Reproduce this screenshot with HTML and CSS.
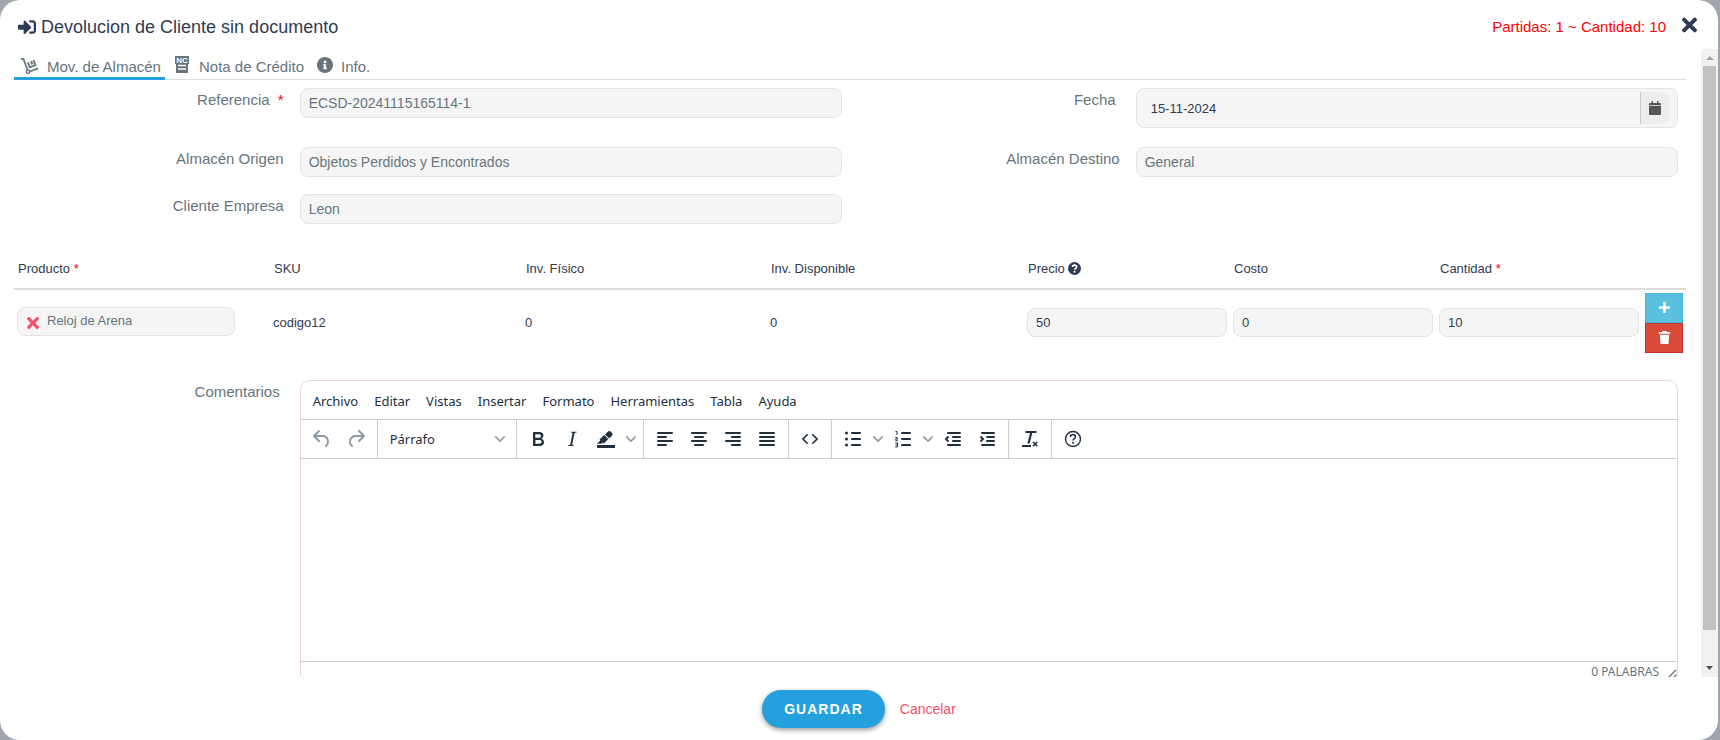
FILE: index.html
```html
<!DOCTYPE html>
<html lang="es">
<head>
<meta charset="utf-8">
<title>Devolucion de Cliente sin documento</title>
<link rel="stylesheet" href="styles.css">
</head>
<body>
<svg class="sprite" aria-hidden="true">
  <symbol id="times" viewBox="0 0 352 512"><path d="M242.72 256l100.07-100.07c12.28-12.28 12.28-32.19 0-44.48l-22.24-22.24c-12.28-12.28-32.19-12.28-44.48 0L176 189.28 75.93 89.21c-12.28-12.28-32.19-12.28-44.48 0L9.21 111.45c-12.28 12.28-12.28 32.19 0 44.48L109.28 256 9.21 356.07c-12.28 12.28-12.28 32.19 0 44.48l22.24 22.24c12.28 12.28 32.2 12.28 44.48 0L176 322.72l100.07 100.07c12.28 12.28 32.2 12.28 44.48 0l22.24-22.24c12.28-12.28 12.28-32.19 0-44.48L242.72 256z"/></symbol>
  <symbol id="chevron" viewBox="0 0 10 10"><path d="M8.7 2.2c.3-.3.8-.3 1 0 .4.4.4.9 0 1.2L5.7 7.8c-.3.3-.9.3-1.2 0L.2 3.4a.8.8 0 0 1 0-1.2c.3-.3.8-.3 1.1 0L5 6l3.7-3.8z"/></symbol>
</svg>
<main class="modal">
  <header class="modal-header">
    <svg class="icon-title" viewBox="0 0 512 512"><path d="M416 448h-84c-6.600 0-12-5.400-12-12v-40c0-6.600 5.400-12 12-12h84c17.700 0 32-14.300 32-32V160c0-17.700-14.300-32-32-32h-84c-6.600 0-12-5.400-12-12V76c0-6.600 5.400-12 12-12h84c53 0 96 43 96 96v192c0 53-43 96-96 96zm-47-201L201 79c-15-15-41-4.500-41 17v96H24c-13.300 0-24 10.700-24 24v96c0 13.300 10.700 24 24 24h136v96c0 21.500 26 32 41 17l168-168c9.300-9.400 9.300-24.600 0-34z"/></svg>
    <h1 class="title">Devolucion de Cliente sin documento</h1>
    <span class="totals">Partidas: 1 ~ Cantidad: 10</span>
    <button class="close" type="button" aria-label="Cerrar"><svg class="icon-close"><use href="#times"/></svg></button>
  </header>

  <div class="modal-body">
    <div class="content">
      <nav class="tabs">
        <button class="tab tab-active" type="button">
          <svg class="icon-tab icon-dolly" viewBox="0 0 20 18"><path d="M1 1.500h2.500L8 13" fill="none" stroke="currentColor" stroke-width="1.800" stroke-linejoin="round"/><path d="M10.500 14.800L19 11.500" stroke="currentColor" stroke-width="1.800" fill="none"/><circle cx="8.500" cy="15" r="1.800" fill="none" stroke="currentColor" stroke-width="1.500"/><path d="M8.300 5.200L10.300 10.400L16.300 8L14.300 2.800" fill="none" stroke="currentColor" stroke-width="2"/><path d="M10.700 4.400l2-.8 1.200 3.300-2 .8z"/></svg>
          Mov. de Almacén</button>
        <button class="tab" type="button">
          <svg class="icon-tab icon-note" viewBox="0 0 14 17"><path d="M0 0h14v8H0zM1 8h12v9H1z"/><text class="note-text" x="7" y="7" text-anchor="middle">NC</text><path d="M3 9.500h8M3 13h8" stroke="#fff" stroke-width="1.400"/></svg>
          Nota de Crédito</button>
        <button class="tab tab-info" type="button">
          <svg class="icon-tab icon-info" viewBox="8 8 496 496"><path d="M256 8C119.043 8 8 119.083 8 256c0 136.997 111.043 248 248 248s248-111.003 248-248C504 119.083 392.957 8 256 8zm0 110c23.196 0 42 18.804 42 42s-18.804 42-42 42-42-18.804-42-42 18.804-42 42-42zm56 254c0 6.627-5.373 12-12 12h-88c-6.627 0-12-5.373-12-12v-24c0-6.627 5.373-12 12-12h12v-64h-12c-6.627 0-12-5.373-12-12v-24c0-6.627 5.373-12 12-12h64c6.627 0 12 5.373 12 12v100h12c6.627 0 12 5.373 12 12v24z"/></svg>
          Info.</button>
      </nav>

      <form class="form" id="movement">
        <div class="row row-tall">
          <div class="field"><label for="ref">Referencia <span class="req req-wide">*</span></label><div class="control"><input id="ref" class="input" value="ECSD-20241115165114-1" readonly></div></div>
          <div class="field"><label for="date" class="label-inset">Fecha</label><div class="control"><div class="date-box"><input id="date" class="date-input" value="15-11-2024"><button class="date-button" type="button" aria-label="Calendario"><svg class="icon-calendar" viewBox="0 0 12 14"><path d="M2.500 0h1.500v2h4V0h1.500v2h1.500q1 0 1 1v1.300H0V3q0-1 1-1h1.500zM0 5h12v8q0 1-1 1H1q-1 0-1-1z"/></svg></button></div></div></div>
        </div>
        <div class="row">
          <div class="field"><label for="origin">Almacén Origen</label><div class="control"><input id="origin" class="input" value="Objetos Perdidos y Encontrados" readonly></div></div>
          <div class="field"><label for="target">Almacén Destino</label><div class="control"><input id="target" class="input" value="General" readonly></div></div>
        </div>
        <div class="row">
          <div class="field"><label for="client">Cliente Empresa</label><div class="control"><input id="client" class="input" value="Leon" readonly></div></div>
        </div>
      </form>

      <table class="items">
        <colgroup><col class="c-product"><col class="c-sku"><col class="c-stock"><col class="c-available"><col class="c-number"><col class="c-number"><col class="c-number"><col class="c-actions"></colgroup>
        <thead><tr>
          <th>Producto <span class="req">*</span></th><th>SKU</th><th>Inv. Físico</th><th>Inv. Disponible</th>
          <th>Precio <svg class="icon-help" viewBox="0 0 16 16"><circle cx="8" cy="8" r="8"/><path d="M5.500 6.200C5.500 3 10.600 3 10.600 6.200c0 1.800-2.500 1.700-2.500 3.300" fill="none" stroke="#fff" stroke-width="2"/><circle cx="8.100" cy="12" r="1.300" fill="#fff"/></svg></th>
          <th>Costo</th><th>Cantidad <span class="req">*</span></th><th></th>
        </tr></thead>
        <tbody><tr>
          <td><div class="product"><button class="remove" type="button" aria-label="Quitar producto"><svg class="icon-remove"><use href="#times"/></svg></button><span>Reloj de Arena</span></div></td>
          <td>codigo12</td><td>0</td><td>0</td>
          <td><input class="input input-small" aria-label="Precio" value="50"></td>
          <td><input class="input input-small" aria-label="Costo" value="0"></td>
          <td><input class="input input-small" aria-label="Cantidad" value="10"></td>
          <td><div class="actions">
            <button class="action action-add" type="button" aria-label="Agregar"><svg class="icon-action" viewBox="0 0 14 14"><path d="M5.700 1h2.600v4.700H13v2.600H8.300V13H5.700V8.300H1V5.700h4.700z"/></svg></button>
            <button class="action action-delete" type="button" aria-label="Eliminar"><svg class="icon-action" viewBox="0 0 14 14"><path d="M5 0h4l.7 1H13v2H1V1h3.300zM2 4h10l-.6 9q-.1 1-1 1H3.600q-.9 0-1-1z"/></svg></button>
          </div></td>
        </tr></tbody>
      </table>

      <div class="comments">
        <label for="editor" class="label-inset">Comentarios</label>
        <div class="control">
          <div class="editor">
            <div class="menubar"><button type="button">Archivo</button><button type="button">Editar</button><button type="button">Vistas</button><button type="button">Insertar</button><button type="button">Formato</button><button type="button">Herramientas</button><button type="button">Tabla</button><button type="button">Ayuda</button></div>
            <div class="toolbar">
              <div class="group">
                <button class="tool muted" type="button" aria-label="Deshacer"><svg viewBox="0 0 24 24"><path d="M6.400 8H12c3.700 0 6.200 2 6.800 5.100.6 2.700-.4 5.600-2.300 6.800a1 1 0 0 1-1-1.800c1.100-.6 1.800-2.700 1.400-4.600-.5-2.100-2.100-3.500-4.900-3.500H6.400l3.300 3.300a1 1 0 1 1-1.400 1.400l-5-5a1 1 0 0 1 0-1.400l5-5a1 1 0 0 1 1.400 1.400L6.400 8z"/></svg></button>
                <button class="tool muted" type="button" aria-label="Rehacer"><svg viewBox="0 0 24 24"><path d="M17.600 10H12c-2.800 0-4.400 1.400-4.900 3.500-.4 2 .3 4 1.400 4.600a1 1 0 1 1-1 1.800c-2-1.200-2.900-4.100-2.300-6.800.6-3 3-5.100 6.800-5.100h5.600l-3.300-3.300a1 1 0 1 1 1.400-1.400l5 5a1 1 0 0 1 0 1.400l-5 5a1 1 0 0 1-1.400-1.400l3.300-3.300z"/></svg></button>
              </div>
              <div class="group"><button class="block-select" type="button"><span>Párrafo</span><svg class="chevron"><use href="#chevron"/></svg></button></div>
              <div class="group">
                <button class="tool" type="button" aria-label="Negrita"><svg viewBox="0 0 24 24"><path d="M7.800 19c-.3 0-.5 0-.6-.2l-.2-.5V5.700c0-.2 0-.4.200-.5l.6-.2h5c1.500 0 2.700.3 3.500 1 .7.6 1.100 1.400 1.100 2.500a3 3 0 0 1-.6 1.900c-.4.6-1 1-1.600 1.200.4.100.9.300 1.300.6s.8.700 1 1.200c.4.400.5 1 .5 1.600 0 1.300-.4 2.300-1.300 3-.8.700-2.100 1-3.800 1H7.800zm5-8.300c.6 0 1.200-.1 1.600-.5.4-.3.6-.7.600-1.300 0-1.100-.8-1.700-2.300-1.700H9.300v3.500h3.400zm.5 6c.7 0 1.300-.1 1.700-.4.4-.4.600-.9.600-1.500s-.2-1-.7-1.400c-.4-.3-1-.4-2-.4H9.400v3.800h4z"/></svg></button>
                <button class="tool" type="button" aria-label="Cursiva"><svg viewBox="0 0 24 24"><path d="M16.700 4.700l-.1.900h-.3c-.6 0-1 0-1.400.3-.3.300-.4.600-.5 1.100l-2.100 9.800v.6c0 .5.400.8 1.400.8h.2l-.2.800H8l.2-.8h.2c1.100 0 1.800-.5 2-1.500l2-9.800.1-.5c0-.6-.4-.8-1.400-.8h-.3l.2-.9h5.800z"/></svg></button>
                <button class="tool" type="button" aria-label="Color de fondo"><svg viewBox="0 0 24 24"><path d="M3 18h18v3H3zM7.700 16.700H3l3.300-3.300-.7-.8L10.200 8l4 4.100-4 4.200c-.2.200-.6.200-.8 0l-.6-.7-1.100 1.100zm5-7.500L11 7.400l3-2.900a2 2 0 0 1 2.600 0L18 6c.7.700.7 2 0 2.700l-2.900 2.900-1.800-1.800z"/></svg></button>
                <button class="drop" type="button" aria-label="Colores"><svg class="chevron"><use href="#chevron"/></svg></button>
              </div>
              <div class="group lines">
                <button class="tool" type="button" aria-label="Alinear a la izquierda"><svg viewBox="0 0 24 24"><path d="M5 6h14M5 10h8M5 14h14M5 18h8"/></svg></button>
                <button class="tool" type="button" aria-label="Centrar"><svg viewBox="0 0 24 24"><path d="M5 6h14M8 10h8M5 14h14M8 18h8"/></svg></button>
                <button class="tool" type="button" aria-label="Alinear a la derecha"><svg viewBox="0 0 24 24"><path d="M5 6h14M11 10h8M5 14h14M11 18h8"/></svg></button>
                <button class="tool" type="button" aria-label="Justificar"><svg viewBox="0 0 24 24"><path d="M5 6h14M5 10h14M5 14h14M5 18h14"/></svg></button>
              </div>
              <div class="group"><button class="tool" type="button" aria-label="Código fuente"><svg viewBox="0 0 24 24"><path d="M9.800 15.700c.3.300.3.800 0 1-.3.400-.9.400-1.200 0l-4.400-4.100a.8.800 0 0 1 0-1.200l4.400-4.200c.3-.3.900-.3 1.200 0 .3.300.3.800 0 1.100L6 12l3.800 3.700zM14.200 15.700c-.3.300-.3.800 0 1 .4.400.9.400 1.200 0l4.400-4.100c.3-.3.300-.8 0-1.200l-4.400-4.200a.8.800 0 0 0-1.200 0c-.3.300-.3.800 0 1.100L18 12l-3.800 3.700z"/></svg></button></div>
              <div class="group lines">
                <button class="tool" type="button" aria-label="Lista"><svg viewBox="0 0 24 24"><path d="M11 6h8M11 12h8M11 18h8"/><path d="M5.500 6h.01M5.500 12h.01M5.500 18h.01" class="dots"/></svg></button>
                <button class="drop" type="button" aria-label="Tipos de lista"><svg class="chevron"><use href="#chevron"/></svg></button>
                <button class="tool" type="button" aria-label="Lista numerada"><svg viewBox="0 0 24 24"><path d="M11 6h8M11 12h8M11 18h8"/><path class="digits" d="M4.500 4.500H6V8M4.300 10.500h2v1.500h-1.500v1.700h2M4.300 16h2.200v4H4.300M4.500 18h2"/></svg></button>
                <button class="drop" type="button" aria-label="Tipos de numeración"><svg class="chevron"><use href="#chevron"/></svg></button>
                <button class="tool" type="button" aria-label="Reducir sangría"><svg viewBox="0 0 24 24"><path d="M7 6h12M12 10h7M12 14h7M7 18h12"/><path class="arrow" d="M7.500 9.500L5 12l2.500 2.500"/></svg></button>
                <button class="tool" type="button" aria-label="Aumentar sangría"><svg viewBox="0 0 24 24"><path d="M7 6h12M12 10h7M12 14h7M7 18h12"/><path class="arrow" d="M5.500 9.500L8 12l-2.500 2.500"/></svg></button>
              </div>
              <div class="group"><button class="tool" type="button" aria-label="Limpiar formato"><svg viewBox="0 0 24 24"><path d="M7.500 4h11v2h-4.200l-2.700 10.500H9.400L12.100 6H7.500zM4 18h9v2H4z"/><path d="M15 15l4.300 4.300M19.300 15L15 19.300" stroke="currentColor" stroke-width="1.600"/></svg></button></div>
              <div class="group"><button class="tool" type="button" aria-label="Ayuda"><svg viewBox="0 0 24 24"><circle cx="12" cy="12" r="7.500" fill="none" stroke="currentColor" stroke-width="1.400"/><path d="M9.500 10c0-3.300 5-3.300 5 0 0 1.600-2.500 1.700-2.500 3.500" fill="none" stroke="currentColor" stroke-width="1.500"/><circle cx="12" cy="15.700" r="1"/></svg></button></div>
            </div>
            <textarea id="editor" class="editor-text"></textarea>
            <div class="statusbar"><span>0 PALABRAS</span><svg class="icon-resize" viewBox="0 0 10 10"><path d="M1 9L9 1M5.500 9.500l4-4" fill="none" stroke="currentColor" stroke-width="1.400"/></svg></div>
          </div>
        </div>
      </div>
    </div>
    <div class="scrollbar" aria-hidden="true">
      <svg class="scroll-arrow arrow-up" viewBox="0 0 17 17"><path d="M5 11l4-4 4 4z"/></svg>
      <div class="track"><div class="thumb"></div></div>
      <svg class="scroll-arrow arrow-down" viewBox="0 0 17 17"><path d="M5 6h7L8.500 10z"/></svg>
    </div>
  </div>

  <footer class="modal-footer">
    <button class="save" type="submit" form="movement">GUARDAR</button>
    <button class="cancel" type="button">Cancelar</button>
  </footer>
</main>
</body>
</html>
```

FILE: styles.css
```css
* { box-sizing: border-box; }
body {
  margin: 0;
  background: #a0a5ae;
  color: #2f3b52;
  font-family: "Liberation Sans", Arial, sans-serif;
  font-size: 15px;
}
button, input, textarea { font: inherit; color: inherit; }
button { background: none; border: 0; padding: 0; cursor: pointer; }
svg { fill: currentColor; flex: none; }
.sprite { display: none; }

.modal {
  display: flex;
  flex-direction: column;
  height: 100vh;
  margin-right: 2px;
  background: #fff;
  border-radius: 20px;
  overflow: hidden;
}
.modal-header {
  display: flex;
  align-items: center;
  height: 49px;
  padding: 4px 21px 0 18px;
  flex: none;
}
.icon-title { width: 18px; height: 18px; margin-right: 5px; }
.title { margin: 0; padding-top: 2px; font-size: 18px; font-weight: 400; flex: 1; }
.totals { padding-bottom: 1px; color: #f00; }
.close { display: flex; margin: 0 0 3px 16px; }
.icon-close { width: 15px; height: 22px; }

.modal-body { display: flex; flex: 1; min-height: 0; }
.content { flex: 1; min-width: 0; padding: 0 15px 0 14px; overflow: hidden; }

.tabs { display: flex; height: 31px; border-bottom: 1px solid #ddd; color: #67757c; }
.tab { display: flex; align-items: center; height: 31px; padding: 6px 0 0 4px; border-bottom: 3px solid transparent; margin-right: 6px; }
.tab-active { padding: 6px 4px 0 6px; border-color: #24a0dc; }
.tab-info { padding-left: 7px; }
.icon-tab { margin-right: 8px; }
.icon-dolly { width: 19px; height: 18px; }
.icon-note { width: 14px; height: 17px; margin: 0 10px 3px 0; }
.note-text { fill: #fff; font-size: 8px; font-weight: 700; }
.icon-info { width: 16px; height: 16px; margin-bottom: 2px; }

.form { padding-top: 8px; }
.row { display: grid; grid-template-columns: 1fr 1fr; min-height: 30px; margin-bottom: 17px; }
.row-tall { min-height: 42px; }
.field { display: grid; grid-template-columns: 1fr 2fr; }
label { padding-right: 9px; line-height: 24px; text-align: right; color: #67757c; }
.label-inset { padding-right: 13px; }
.control { padding: 0 8px 0 7px; min-width: 0; }
.req { color: #f00; }
.req-wide { margin-left: 4px; }
.input {
  display: block;
  width: 100%;
  height: 30px;
  padding: 0 8px;
  border: 1px solid #e4e4e4;
  border-radius: 8px;
  background: #f5f5f5;
  color: #67757c;
  font-size: 14px;
}
.date-box {
  display: flex;
  height: 40px;
  padding: 3px 8px 3px 14px;
  border: 1px solid #e4e4e4;
  border-radius: 8px;
  background: #f5f5f5;
}
.date-input { flex: 1; min-width: 0; padding: 0; border: 0; background: none; font-size: 13px; }
.date-button {
  display: flex;
  align-items: center;
  justify-content: center;
  width: 29px;
  border-left: 1px solid #ccc;
  border-radius: 0 8px 8px 0;
  background: #ededed;
  color: #555;
}
.icon-calendar { width: 12px; height: 14px; }

.items { width: 100%; margin-top: 23px; border-collapse: collapse; table-layout: fixed; font-size: 13px; }
.c-product { width: 256px; }
.c-sku { width: 252px; }
.c-stock { width: 245px; }
.c-available { width: 257px; }
.c-number { width: 206px; }
.c-actions { width: 44px; }
.items th { height: 42px; padding: 1px 4px 0; border-bottom: 2px solid #ddd; text-align: left; font-weight: 400; }
.items td { height: 66px; padding: 0 3px; }
.icon-help { width: 13px; height: 13px; vertical-align: -2px; }
.product {
  display: flex;
  width: 87%;
  height: 29px;
  margin-bottom: 3px;
  padding-left: 9px;
  border: 1px solid #e4e4e4;
  border-radius: 8px;
  background: #f5f5f5;
  color: #67757c;
  line-height: 26px;
}
.remove { display: flex; align-items: center; margin-right: 8px; padding-top: 3px; color: #f4516c; }
.icon-remove { width: 12px; height: 18px; }
.input-small { height: 29px; font-size: 13px; color: #2f3b52; }
.actions { width: 38px; }
.action { display: flex; align-items: center; justify-content: center; width: 100%; height: 30px; color: #fff; }
.action-add { background: #5bc0de; border: 1px solid #46b8da; }
.action-delete { background: #d94b38; border: 1px solid #c23028; }
.icon-action { width: 13px; height: 13px; }

.comments { display: grid; grid-template-columns: 1fr 5fr; margin-top: 25px; }
.editor {
  border: 1px solid #ecd5da;
  border-radius: 10px;
  overflow: hidden;
  color: #222f3e;
  font-family: "Noto Sans", "Open Sans", sans-serif;
  font-size: 13px;
}
.menubar { display: flex; gap: 16px; height: 39px; padding: 2px 12px 0; border-bottom: 1px solid #ccc; }
.toolbar { display: flex; height: 39px; border-bottom: 1px solid #ccc; }
.group { display: flex; padding: 0 4px; border-right: 1px solid #ccc; }
.group:last-child { border-right: 0; }
.tool, .drop { display: flex; align-items: center; justify-content: center; width: 34px; }
.tool svg { width: 24px; height: 24px; }
.drop { width: 16px; }
.muted, .chevron { color: #909aa5; }
.chevron { width: 10px; height: 10px; }
.block-select { display: flex; align-items: center; justify-content: space-between; width: 130px; padding: 0 7px 0 8px; }
.lines .tool path { fill: none; stroke: currentColor; stroke-width: 2; stroke-linecap: round; }
.lines .tool .dots { stroke-width: 3; }
.lines .tool .digits { stroke-width: 1; stroke-linecap: butt; }
.lines .tool .arrow { stroke-linecap: butt; }
.editor-text { display: block; width: 100%; height: 202px; padding: 16px; border: 0; outline: 0; resize: none; }
.statusbar {
  display: flex;
  justify-content: flex-end;
  gap: 8px;
  height: 22px;
  border-top: 1px solid #ccc;
  color: #6b7580;
  font-size: 12px;
  line-height: 20px;
}
.icon-resize { width: 10px; height: 10px; margin-top: 7px; }

.scrollbar { display: flex; flex-direction: column; width: 17px; background: #f1f1f1; }
.scroll-arrow { width: 17px; height: 17px; }
.arrow-up { color: #a3a3a3; }
.arrow-down { color: #505050; }
.track { flex: 1; padding: 0 2px; }
.thumb { height: 95%; background: #c1c1c1; }

.modal-footer { display: flex; align-items: center; justify-content: center; gap: 15px; height: 63px; flex: none; }
.save {
  height: 38px;
  padding: 0 22px;
  border-radius: 19px;
  background: #24a0dc;
  color: #fff;
  font-size: 14px;
  font-weight: 700;
  letter-spacing: 1px;
  box-shadow: 0 2px 5px rgba(0, 0, 0, .4);
}
.cancel { color: #f4516c; font-size: 14px; }
```
